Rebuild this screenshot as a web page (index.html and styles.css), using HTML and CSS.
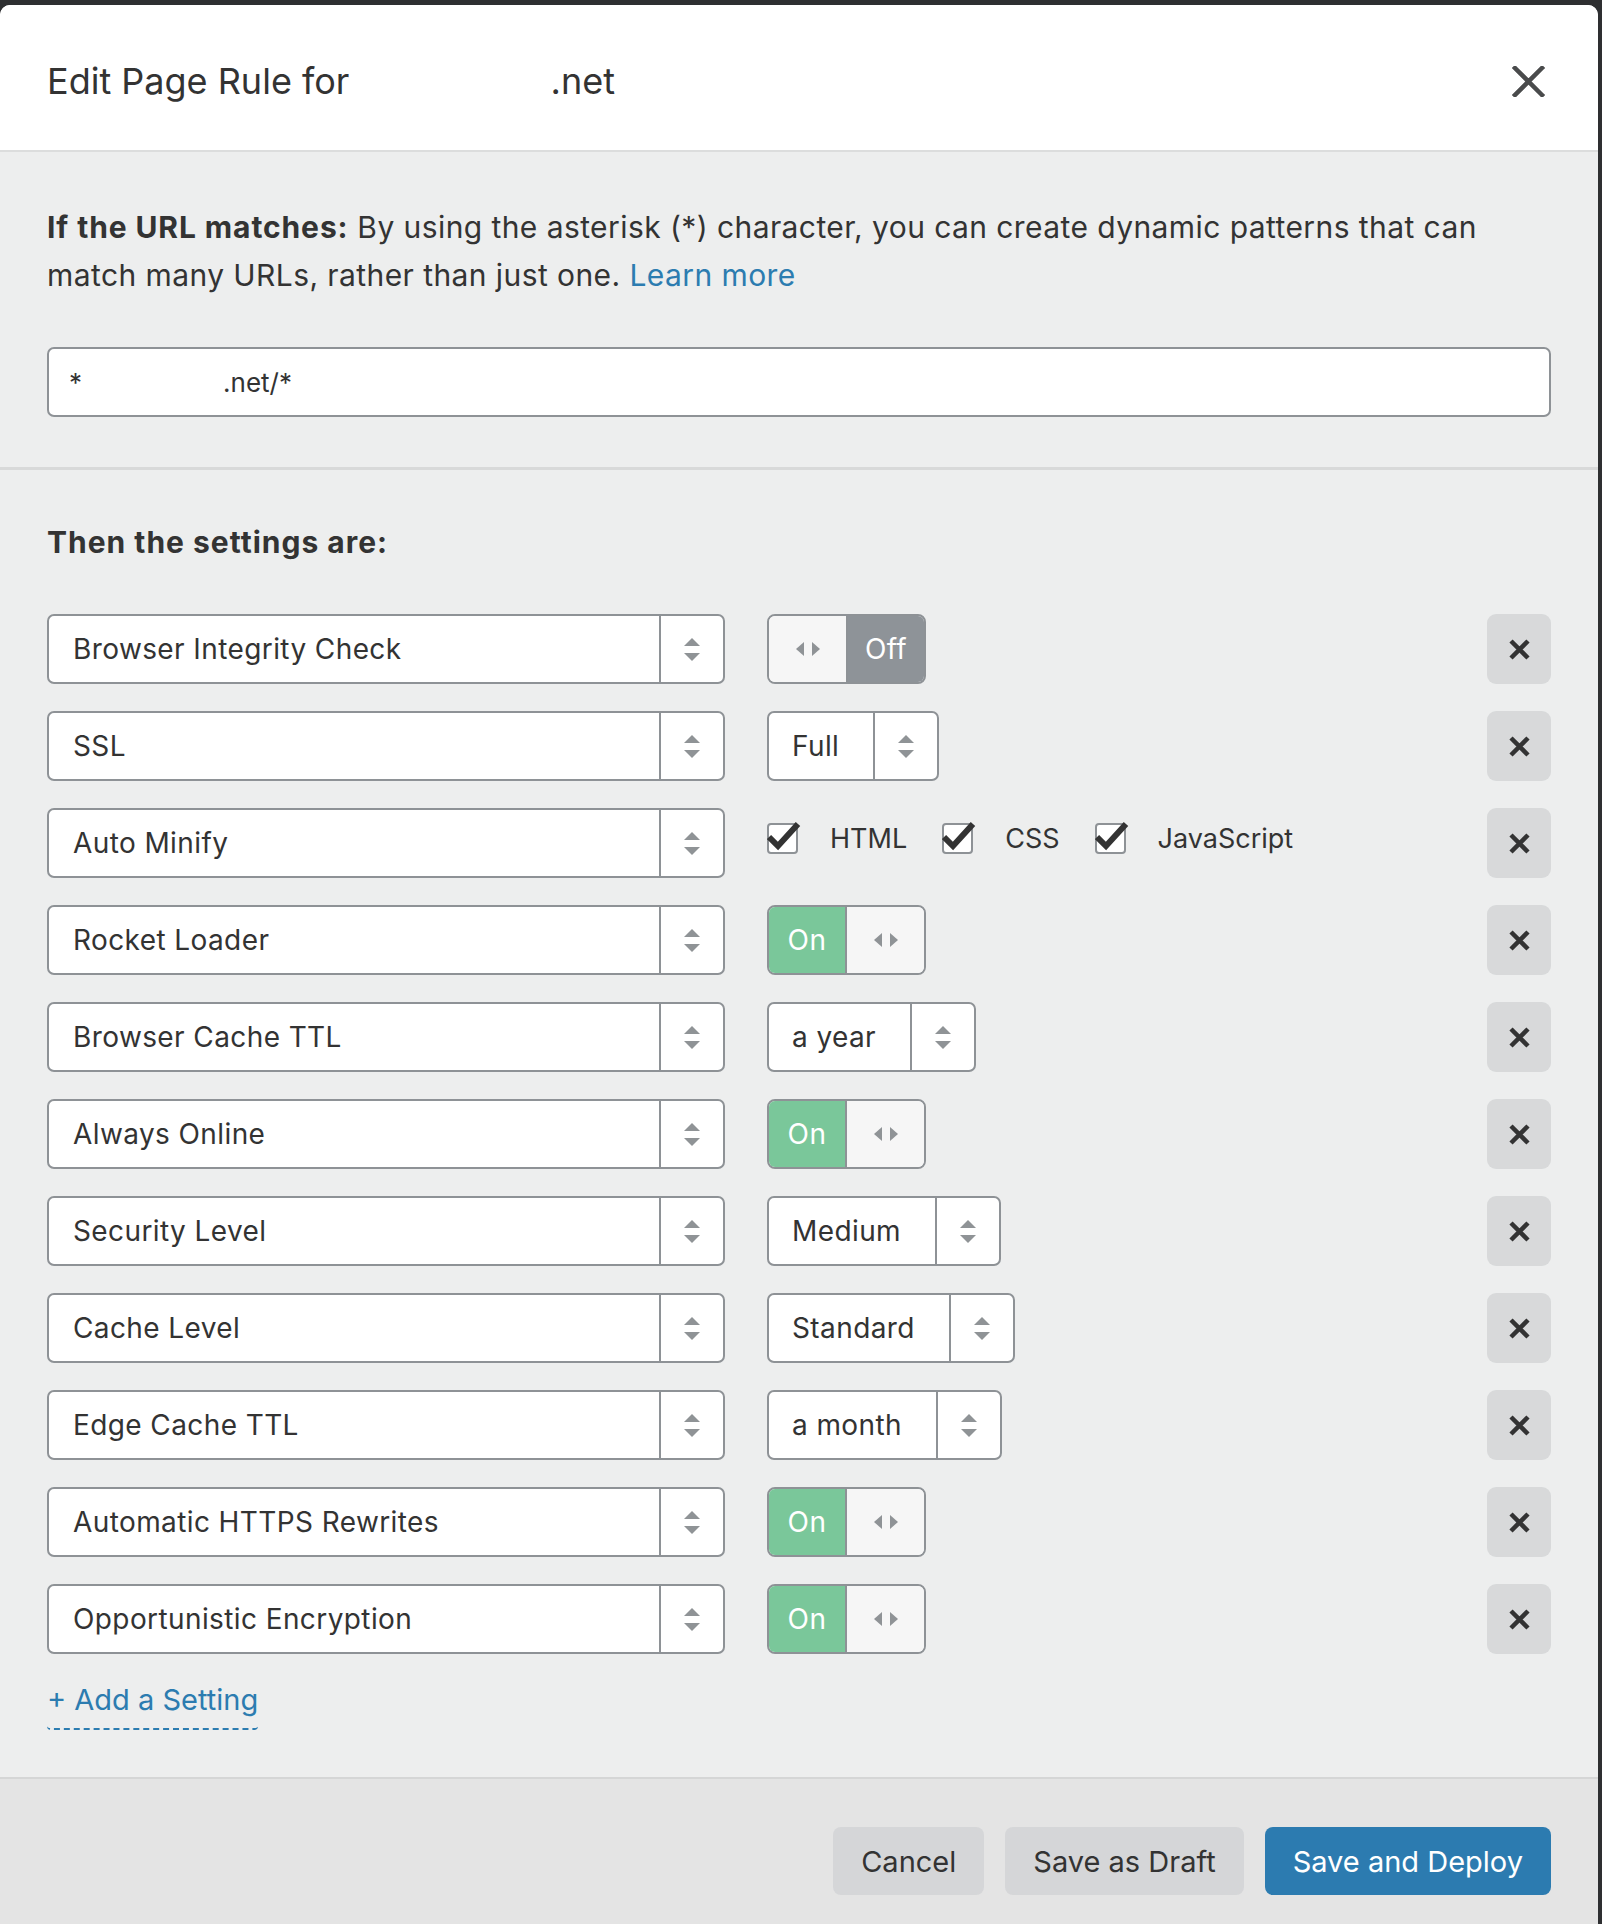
FILE: index.html
```html
<!DOCTYPE html>
<html lang="en">
<head>
<meta charset="utf-8">
<title>Edit Page Rule</title>
<link rel="stylesheet" href="styles.css">
</head>
<body>
<div class="modal">
  <header class="modal-header">
    <h1 class="title">Edit Page Rule for <span class="redacted-title"></span>.net</h1>
    <button class="close" aria-label="Close">
      <svg width="33" height="31" viewBox="0 0 33 31"><path d="M3 2 L30 29 M30 2 L3 29" stroke="#4a4b4c" stroke-width="4.5" stroke-linecap="square"/></svg>
    </button>
  </header>

  <section class="match">
    <p class="intro"><strong>If the URL matches:</strong> By using the asterisk (*) character, you can create dynamic patterns that can match many URLs, rather than just one. <a href="#" class="link">Learn more</a></p>
    <div class="url-input"><span>*</span><span class="redacted-url"></span><span>.net/*</span></div>
  </section>

  <section class="settings">
    <h2 class="settings-title">Then the settings are:</h2>

    <div class="rows">
      <div class="row">
        <div class="select"><span class="select-text">Browser Integrity Check</span><span class="select-arrow"><i class="up"></i><i class="down"></i></span></div>
        <div class="toggle off"><span class="toggle-knob"><i class="lt"></i><i class="rt"></i></span><span class="toggle-label">Off</span></div>
        <button class="remove" aria-label="Remove"><svg width="23" height="23" viewBox="0 0 23 23"><path d="M3 3 L20 20 M20 3 L3 20" stroke="#333" stroke-width="4.5"/></svg></button>
      </div>

      <div class="row">
        <div class="select"><span class="select-text">SSL</span><span class="select-arrow"><i class="up"></i><i class="down"></i></span></div>
        <div class="value-select"><span class="value-text">Full</span><span class="select-arrow"><i class="up"></i><i class="down"></i></span></div>
        <button class="remove" aria-label="Remove"><svg width="23" height="23" viewBox="0 0 23 23"><path d="M3 3 L20 20 M20 3 L3 20" stroke="#333" stroke-width="4.5"/></svg></button>
      </div>

      <div class="row">
        <div class="select"><span class="select-text">Auto Minify</span><span class="select-arrow"><i class="up"></i><i class="down"></i></span></div>
        <div class="checks">
          <label class="check"><span class="box"><svg width="34" height="32" viewBox="0 0 34 32"><path d="M2 17 L11 26 L31 4" fill="none" stroke="#333" stroke-width="6"/></svg></span><span class="check-label">HTML</span></label>
          <label class="check"><span class="box"><svg width="34" height="32" viewBox="0 0 34 32"><path d="M2 17 L11 26 L31 4" fill="none" stroke="#333" stroke-width="6"/></svg></span><span class="check-label">CSS</span></label>
          <label class="check"><span class="box"><svg width="34" height="32" viewBox="0 0 34 32"><path d="M2 17 L11 26 L31 4" fill="none" stroke="#333" stroke-width="6"/></svg></span><span class="check-label">JavaScript</span></label>
        </div>
        <button class="remove" aria-label="Remove"><svg width="23" height="23" viewBox="0 0 23 23"><path d="M3 3 L20 20 M20 3 L3 20" stroke="#333" stroke-width="4.5"/></svg></button>
      </div>

      <div class="row">
        <div class="select"><span class="select-text">Rocket Loader</span><span class="select-arrow"><i class="up"></i><i class="down"></i></span></div>
        <div class="toggle on"><span class="toggle-label">On</span><span class="toggle-knob"><i class="lt"></i><i class="rt"></i></span></div>
        <button class="remove" aria-label="Remove"><svg width="23" height="23" viewBox="0 0 23 23"><path d="M3 3 L20 20 M20 3 L3 20" stroke="#333" stroke-width="4.5"/></svg></button>
      </div>

      <div class="row">
        <div class="select"><span class="select-text">Browser Cache TTL</span><span class="select-arrow"><i class="up"></i><i class="down"></i></span></div>
        <div class="value-select"><span class="value-text">a year</span><span class="select-arrow"><i class="up"></i><i class="down"></i></span></div>
        <button class="remove" aria-label="Remove"><svg width="23" height="23" viewBox="0 0 23 23"><path d="M3 3 L20 20 M20 3 L3 20" stroke="#333" stroke-width="4.5"/></svg></button>
      </div>

      <div class="row">
        <div class="select"><span class="select-text">Always Online</span><span class="select-arrow"><i class="up"></i><i class="down"></i></span></div>
        <div class="toggle on"><span class="toggle-label">On</span><span class="toggle-knob"><i class="lt"></i><i class="rt"></i></span></div>
        <button class="remove" aria-label="Remove"><svg width="23" height="23" viewBox="0 0 23 23"><path d="M3 3 L20 20 M20 3 L3 20" stroke="#333" stroke-width="4.5"/></svg></button>
      </div>

      <div class="row">
        <div class="select"><span class="select-text">Security Level</span><span class="select-arrow"><i class="up"></i><i class="down"></i></span></div>
        <div class="value-select"><span class="value-text">Medium</span><span class="select-arrow"><i class="up"></i><i class="down"></i></span></div>
        <button class="remove" aria-label="Remove"><svg width="23" height="23" viewBox="0 0 23 23"><path d="M3 3 L20 20 M20 3 L3 20" stroke="#333" stroke-width="4.5"/></svg></button>
      </div>

      <div class="row">
        <div class="select"><span class="select-text">Cache Level</span><span class="select-arrow"><i class="up"></i><i class="down"></i></span></div>
        <div class="value-select"><span class="value-text">Standard</span><span class="select-arrow"><i class="up"></i><i class="down"></i></span></div>
        <button class="remove" aria-label="Remove"><svg width="23" height="23" viewBox="0 0 23 23"><path d="M3 3 L20 20 M20 3 L3 20" stroke="#333" stroke-width="4.5"/></svg></button>
      </div>

      <div class="row">
        <div class="select"><span class="select-text">Edge Cache TTL</span><span class="select-arrow"><i class="up"></i><i class="down"></i></span></div>
        <div class="value-select"><span class="value-text">a month</span><span class="select-arrow"><i class="up"></i><i class="down"></i></span></div>
        <button class="remove" aria-label="Remove"><svg width="23" height="23" viewBox="0 0 23 23"><path d="M3 3 L20 20 M20 3 L3 20" stroke="#333" stroke-width="4.5"/></svg></button>
      </div>

      <div class="row">
        <div class="select"><span class="select-text">Automatic HTTPS Rewrites</span><span class="select-arrow"><i class="up"></i><i class="down"></i></span></div>
        <div class="toggle on"><span class="toggle-label">On</span><span class="toggle-knob"><i class="lt"></i><i class="rt"></i></span></div>
        <button class="remove" aria-label="Remove"><svg width="23" height="23" viewBox="0 0 23 23"><path d="M3 3 L20 20 M20 3 L3 20" stroke="#333" stroke-width="4.5"/></svg></button>
      </div>

      <div class="row">
        <div class="select"><span class="select-text">Opportunistic Encryption</span><span class="select-arrow"><i class="up"></i><i class="down"></i></span></div>
        <div class="toggle on"><span class="toggle-label">On</span><span class="toggle-knob"><i class="lt"></i><i class="rt"></i></span></div>
        <button class="remove" aria-label="Remove"><svg width="23" height="23" viewBox="0 0 23 23"><path d="M3 3 L20 20 M20 3 L3 20" stroke="#333" stroke-width="4.5"/></svg></button>
      </div>
    </div>

    <a href="#" class="add-setting">+ Add a Setting</a>
  </section>

  <footer class="modal-footer">
    <button class="btn btn-grey">Cancel</button>
    <button class="btn btn-grey">Save as Draft</button>
    <button class="btn btn-blue">Save and Deploy</button>
  </footer>
</div>
</body>
</html>
```

FILE: styles.css
```css
html, body {
  margin: 0;
  padding: 0;
}
body {
  background: #2e2f31;
  font-family: Inter, "Liberation Sans", Arial, sans-serif;
  color: #333;
  height: 1924px;
  overflow: hidden;
}
.modal {
  margin-top: 5px;
  width: 1598px;
  background: #fff;
  border-radius: 10px 10px 0 0;
  overflow: hidden;
}
.modal-header {
  box-sizing: border-box;
  height: 147px;
  display: flex;
  align-items: center;
  justify-content: space-between;
  padding: 7px 47px 0 47px;
  border-bottom: 2px solid #dcdddd;
  background: #fff;
}
.title {
  margin: 0;
  font-size: 36px;
  font-weight: 400;
  color: #333;
  letter-spacing: 0;
}
.redacted-title {
  display: inline-block;
  width: 191px;
}
.close {
  width: 46px;
  height: 46px;
  border: 0;
  padding: 0;
  background: transparent;
  display: flex;
  align-items: center;
  justify-content: center;
}

.match {
  background: #edeeee;
  padding: 51px 47px 50px 47px;
  border-bottom: 3px solid #d8d9d9;
}
.intro {
  margin: 0;
  font-size: 30px;
  line-height: 48px;
  letter-spacing: 0.42px;
  color: #333;
}
.intro strong {
  font-weight: 700;
  letter-spacing: 0.9px;
}
.link {
  color: #2c7cb0;
  text-decoration: none;
}
.url-input {
  box-sizing: border-box;
  margin-top: 48px;
  height: 70px;
  background: #fff;
  border: 2px solid #8e9296;
  border-radius: 7px;
  display: flex;
  align-items: center;
  padding: 0 20px;
  font-size: 26px;
  color: #333;
}
.redacted-url {
  display: inline-block;
  width: 141px;
}

.settings {
  background: #edeeee;
  padding: 48px 47px 47px 47px;
  border-bottom: 2px solid #d5d6d6;
}
.settings-title {
  margin: 0 0 48px;
  font-size: 30px;
  line-height: 48px;
  font-weight: 700;
  letter-spacing: 1px;
  color: #333;
}
.rows {
  display: flex;
  flex-direction: column;
  gap: 27px;
}
.row {
  display: flex;
  align-items: center;
  height: 70px;
}
.select {
  box-sizing: border-box;
  width: 678px;
  height: 70px;
  background: #fff;
  border: 2px solid #8e9296;
  border-radius: 7px;
  display: flex;
  align-items: stretch;
  margin-right: 42px;
}
.select-text {
  flex: 1;
  display: flex;
  align-items: center;
  padding-left: 24px;
  font-size: 28px;
  letter-spacing: 0.4px;
  color: #333;
}
.select-arrow {
  width: 62px;
  border-left: 2px solid #8e9296;
  display: flex;
  flex-direction: column;
  align-items: center;
  justify-content: center;
  gap: 7px;
}
.select-arrow i {
  display: block;
  width: 0;
  height: 0;
  border-left: 8px solid transparent;
  border-right: 8px solid transparent;
}
.select-arrow .up {
  border-bottom: 8px solid #8f9396;
}
.select-arrow .down {
  border-top: 8px solid #8f9396;
}

.value-select {
  box-sizing: border-box;
  height: 70px;
  background: #fff;
  border: 2px solid #8e9296;
  border-radius: 7px;
  display: flex;
  align-items: stretch;
}
.value-text {
  display: flex;
  align-items: center;
  padding: 0 34px 0 23px;
  font-size: 28px;
  letter-spacing: 0.4px;
  color: #333;
}

.toggle {
  box-sizing: border-box;
  width: 159px;
  height: 70px;
  border: 2px solid #8e9296;
  border-radius: 8px;
  display: flex;
  overflow: hidden;
  background: #f6f6f6;
}
.toggle-knob {
  width: 78px;
  display: flex;
  align-items: center;
  justify-content: center;
  gap: 8px;
  background: #f6f6f6;
}
.toggle-knob i {
  display: block;
  width: 0;
  height: 0;
  border-top: 7px solid transparent;
  border-bottom: 7px solid transparent;
}
.toggle-knob .lt {
  border-right: 8px solid #8f9396;
}
.toggle-knob .rt {
  border-left: 8px solid #8f9396;
}
.toggle-label {
  width: 77px;
  display: flex;
  align-items: center;
  justify-content: center;
  font-size: 28px;
  letter-spacing: 0.4px;
  color: #fff;
}
.toggle.off .toggle-label {
  background: #8e9398;
  border-left: 2px solid #8e9296;
}
.toggle.on .toggle-label {
  background: #7ac79a;
  border-right: 2px solid #8e9296;
}

.checks {
  display: flex;
  align-items: center;
  gap: 35px;
  margin-top: -10px;
}
.check {
  display: flex;
  align-items: center;
  gap: 32px;
}
.box {
  position: relative;
  box-sizing: border-box;
  width: 31px;
  height: 31px;
  background: #fff;
  border: 2px solid #8e9296;
  border-radius: 4px;
}
.box svg {
  position: absolute;
  left: -2px;
  top: -5px;
}
.check-label {
  font-size: 27px;
  letter-spacing: 0;
  color: #333;
}

.remove {
  margin-left: auto;
  width: 64px;
  height: 70px;
  border: 0;
  padding: 0;
  border-radius: 9px;
  background: #d8d9da;
  display: flex;
  align-items: center;
  justify-content: center;
}

.add-setting {
  display: inline-block;
  margin-top: 26px;
  font-size: 29px;
  line-height: 40px;
  padding-bottom: 8px;
  color: #2c7cb0;
  text-decoration: none;
  border-bottom: 2px dashed #2c7cb0;
  border-radius: 0 0 4px 4px;
}

.modal-footer {
  background: #e4e4e4;
  height: 146px;
  display: flex;
  justify-content: flex-end;
  align-items: flex-start;
  gap: 21px;
  padding: 48px 47px 0 47px;
}
.btn {
  height: 68px;
  border: 0;
  border-radius: 8px;
  padding: 0 28px;
  font-family: Inter, "Liberation Sans", Arial, sans-serif;
  font-size: 29px;
}
.btn-grey {
  background: #d5d6d8;
  color: #333;
}
.btn-blue {
  background: #2c7bb0;
  color: #fff;
}
```
